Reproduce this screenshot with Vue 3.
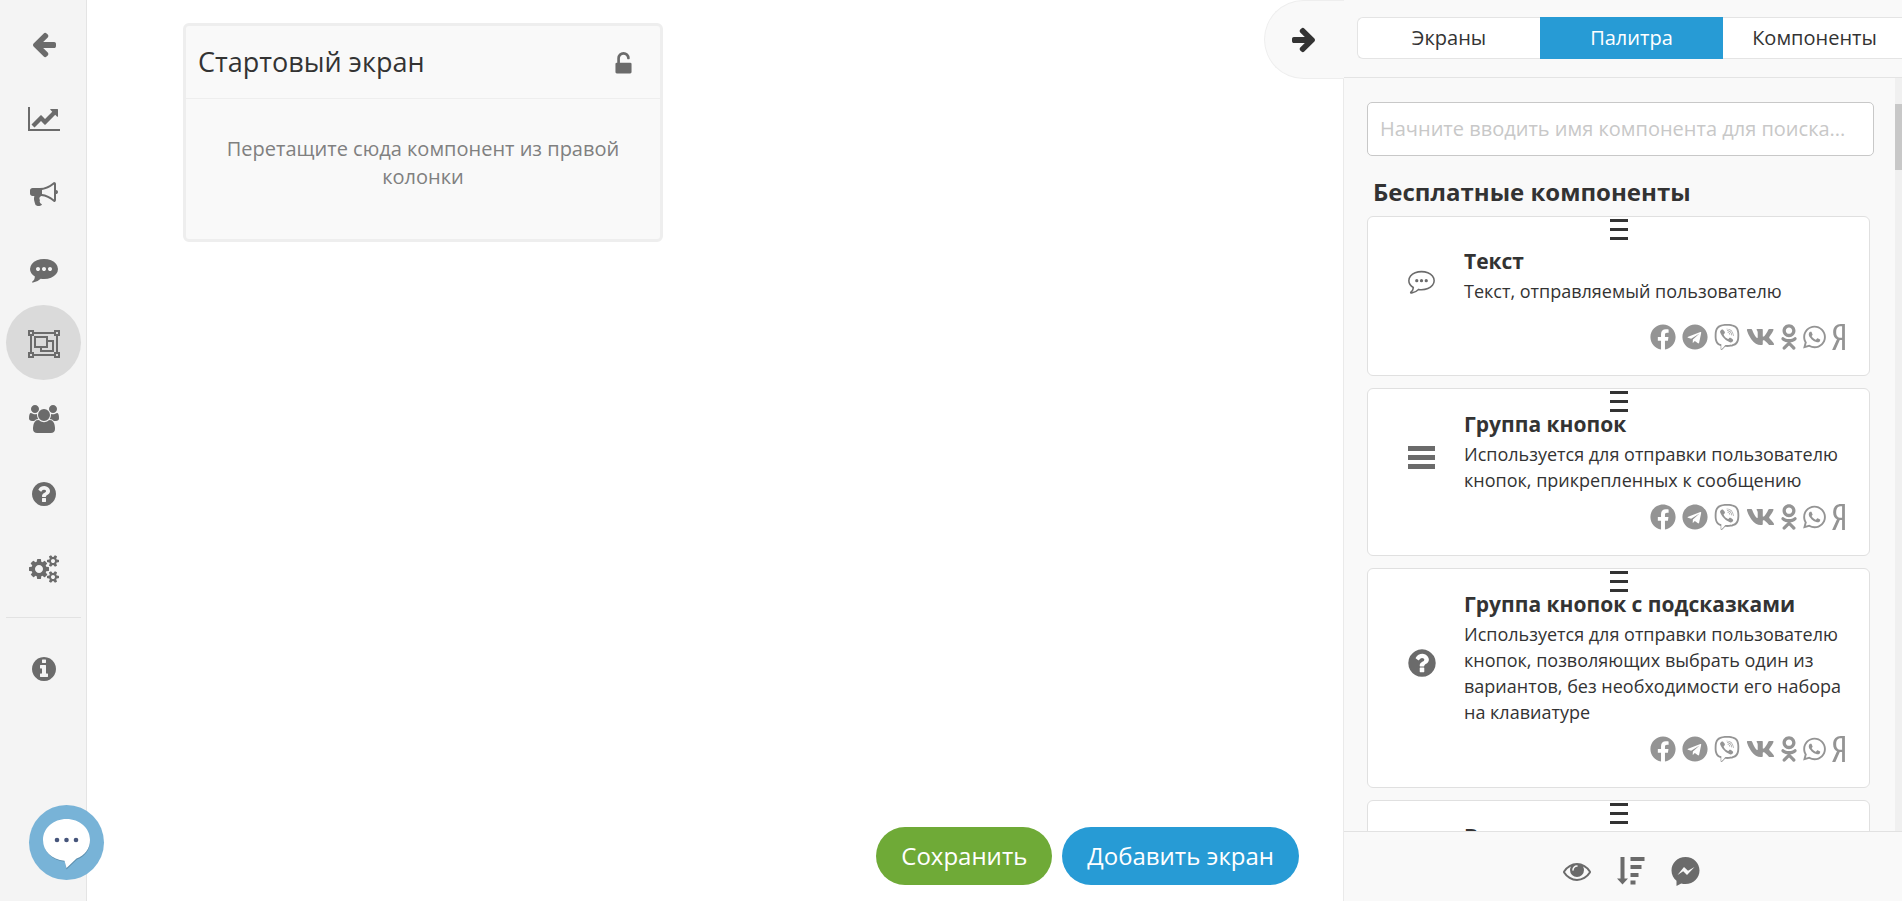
<template>
  <div class="builder">
    <nav class="sidebar" aria-label="Меню">
      <a
        v-for="item in menu"
        :key="item.icon"
        href="#"
        class="sidebar-item"
        :class="{ active: item.active, separated: item.separated }"
        :aria-label="item.label"
      >
        <svg class="icon" :width="icons[item.icon].w / 64" height="28" :viewBox="`0 0 ${icons[item.icon].w} 1792`">
          <path :d="icons[item.icon].d" />
        </svg>
      </a>
    </nav>

    <main class="workspace">
      <section class="screen">
        <header class="screen-header">
          <h2 class="screen-title">Стартовый экран</h2>
          <button class="icon-button" aria-label="Заблокировать">
            <svg class="icon" width="25" height="25" viewBox="0 0 1792 1792">
              <path :d="icons.unlock.d" />
            </svg>
          </button>
        </header>
        <p class="screen-hint">Перетащите сюда компонент из правой колонки</p>
      </section>

      <div class="actions">
        <button class="action save">Сохранить</button>
        <button class="action add">Добавить экран</button>
      </div>
    </main>

    <aside class="panel">
      <button class="collapse" aria-label="Свернуть">
        <svg class="icon" width="28" height="28" viewBox="0 0 1792 1792">
          <path :d="icons.right.d" />
        </svg>
      </button>

      <div class="tabs">
        <button
          v-for="tab in tabs"
          :key="tab"
          class="tab"
          :class="{ active: tab === activeTab }"
          @click="activeTab = tab"
        >{{ tab }}</button>
      </div>

      <div class="panel-body">
        <div class="palette">
          <input
            v-model="search"
            class="search"
            type="text"
            aria-label="Поиск компонента"
            placeholder="Начните вводить имя компонента для поиска..."
          >
          <h3 class="palette-title">Бесплатные компоненты</h3>

          <article v-for="card in cards" :key="card.title" class="card">
            <svg class="grip" width="18" height="21" viewBox="0 0 18 21">
              <path d="M0 0h18v3H0zM0 9h18v3H0zM0 18h18v3H0z" />
            </svg>
            <div class="card-body">
              <div class="card-icon">
                <svg v-if="card.icon === 'comment'" width="27" height="27" viewBox="-60 0 1912 1912">
                  <path class="outline" :d="bubble" />
                  <circle cx="560" cy="896" r="115" />
                  <circle cx="896" cy="896" r="115" />
                  <circle cx="1232" cy="896" r="115" />
                </svg>
                <svg v-else-if="card.icon === 'bars'" width="27" height="23" viewBox="0 0 27 23">
                  <path d="M0 0h27v5H0zM0 9h27v5H0zM0 18h27v5H0z" />
                </svg>
                <svg v-else width="32" height="32" viewBox="0 0 1792 1792">
                  <path :d="icons.question.d" />
                </svg>
              </div>
              <div class="card-text">
                <h4 class="card-title">{{ card.title }}</h4>
                <p class="card-description">{{ card.description }}</p>
              </div>
            </div>
            <div class="socials">
              <svg
                v-for="s in socials"
                :key="s.name"
                :width="s.px"
                height="26"
                :viewBox="`0 0 ${s.w} 512`"
              >
                <path :d="s.d" />
              </svg>
            </div>
          </article>
        </div>
        <div class="scrollbar">
          <div class="thumb"></div>
        </div>
      </div>

      <footer class="panel-footer">
        <button class="icon-button" aria-label="Просмотр">
          <svg class="icon" width="28" height="28" viewBox="0 0 1792 1792">
            <path :d="icons.eye.d" />
          </svg>
        </button>
        <button class="icon-button" aria-label="Сортировка">
          <svg class="icon" width="28" height="28" viewBox="0 0 28 28">
            <path d="M3.5 0h4v21.5H11L5.500 27.500 0 21.500h3.500zM13.500 0h14v4h-14zM13.500 8h11v4h-11zM13.500 16h8v4h-8zM13.500 23.500h5v4h-5z" />
          </svg>
        </button>
        <button class="icon-button" aria-label="Messenger">
          <svg class="icon" width="28" height="28" viewBox="0 0 28 28">
            <path fill-rule="evenodd" d="M14.500 0C6.500 0 .5 6 .5 13.500c0 4.200 1.900 7.700 5 10.200V29l4.700-2.600c1.400.4 2.800.6 4.300.6 8 0 14-6 14-13.500S22.500 0 14.500 0zM6.500 18L13 10l4 3.800L23.500 10 16 18l-3.800-3.800z" />
          </svg>
        </button>
      </footer>
    </aside>

    <button class="chat" aria-label="Чат">
      <svg width="75" height="75" viewBox="0 0 75 75">
        <path class="chat-shadow" d="M37.500 15.500C24.500 15.500 14.500 24.500 14.500 36c0 10.500 8.500 19.500 21.500 20.800l1.500 7.700 10.500-10c8.500-3 13-10 13-18.500 0-11.500-10.500-20.500-23.500-20.500z" />
        <path class="chat-bubble" d="M37.500 14C24.500 14 14 23 14 35c0 11 8.500 19.500 21.500 20.800l2 7.200 10-9.500C56 50.500 61 43.500 61 35c0-12-10.500-21-23.500-21z" />
        <circle class="chat-dot" cx="28" cy="35" r="2.300" />
        <circle class="chat-dot" cx="37.500" cy="35" r="2.300" />
        <circle class="chat-dot" cx="47" cy="35" r="2.300" />
      </svg>
    </button>
  </div>
</template>

<script setup>
import { ref } from 'vue'

const search = ref('')
const tabs = ['Экраны', 'Палитра', 'Компоненты']
const activeTab = ref('Палитра')

const menu = [
  { icon: 'left', label: 'Назад' },
  { icon: 'chart', label: 'Статистика' },
  { icon: 'bullhorn', label: 'Рассылки' },
  { icon: 'commenting', label: 'Диалоги' },
  { icon: 'group', label: 'Конструктор', active: true },
  { icon: 'users', label: 'Пользователи' },
  { icon: 'question', label: 'Помощь' },
  { icon: 'cogs', label: 'Настройки' },
  { icon: 'info', label: 'Информация', separated: true }
]

const cards = [
  {
    icon: 'comment',
    title: 'Текст',
    description: 'Текст, отправляемый пользователю'
  },
  {
    icon: 'bars',
    title: 'Группа кнопок',
    description: 'Используется для отправки пользователю кнопок, прикрепленных к сообщению'
  },
  {
    icon: 'question',
    title: 'Группа кнопок с подсказками',
    description: 'Используется для отправки пользователю кнопок, позволяющих выбрать один из вариантов, без необходимости его набора на клавиатуре'
  },
  {
    icon: 'question',
    title: 'Вопрос',
    description: 'Используется для отправки пользователю вопроса и получения ответа на него'
  }
]

const circle = 'm640 0q0 209-103 385.5t-279.5 279.5-385.5 103-385.5-103-279.5-279.5-103-385.5 103-385.5 279.5-279.5 385.5-103 385.5 103 279.5 279.5 103 385.5z'
const bubble = 'M1792 896q0 174-120 321.5t-326 233-450 85.5q-110 0-211-18-173 173-435 229-52 10-86 13-12 1-22-6t-13-18q-4-15 20-37 5-5 23.5-21.5t25.5-23.5 23.5-25.5 24-31.500 20.5-37 20-48 14.5-57.5 12.500-72.500q-146-90-229.5-216.5t-83.5-269.5q0-174 120-321.5t326-233 450-85.5 450 85.5 326 233 120 321.5z'
const dot = 'q0-53-37.5-90.5t-90.5-37.5-90.5 37.5-37.5 90.5 37.5 90.5 90.5 37.5 90.5-37.5 37.5-90.5z'
const smallGear = 'v140q0 16-149 31-12 27-30 52 51 113 51 138 0 4-4 7-122 71-124 71-8 0-46-47t-52-68q-20 2-30 2t-30-2q-14 21-52 68t-46 47q-2 0-124-71-4-3-4-7 0-25 51-138-18-25-30-52-149-15-149-31v-140q0-16 149-31 13-29 30-52-51-113-51-138 0-4 4-7 4-2 35-20t59-34 30-16q8 0 46 46.500t52 67.500q20-2 30-2t30 2q51-71 92-112l6-2q4 0 124 70 4 3 4 7 0 25-51 138 17 23 30 52 149 15 149 31z'

const icons = {
  left: {
    w: 1792,
    d: 'M1664 896v128q0 53-32.5 90.5t-84.5 37.5h-704l293 294q38 36 38 90t-38 90l-75 76q-37 37-90 37-52 0-91-37l-651-652q-37-37-37-90 0-52 37-91l651-650q38-38 91-38 52 0 90 38l75 74q38 38 38 91t-38 91l-293 293h704q52 0 84.500 37.500t32.500 90.500z'
  },
  right: {
    w: 1792,
    d: 'M1600 960q0 54-37 91l-651 651q-39 37-91 37-51 0-90-37l-75-75q-38-38-38-91t38-91l293-293h-704q-52 0-84.500-37.500t-32.500-90.500v-128q0-53 32.500-90.500t84.500-37.500h704l-293-294q-38-36-38-90t38-90l75-75q38-38 90-38 53 0 91 38l651 651q37 35 37 90z'
  },
  chart: {
    w: 2048,
    d: 'M2048 1536v128h-2048v-1536h128v1408h1920zm-128-1248v435q0 21-19.5 29.500t-35.500-7.500l-121-121-633 633q-10 10-23 10t-23-10l-233-233-416 416-192-192 585-585q10-10 23-10t23 10l233 233 464-464-121-121q-16-16-7.500-35.500t29.500-19.500h435q14 0 23 9t9 23z'
  },
  bullhorn: {
    w: 1792,
    d: 'M1664 640q53 0 90.500 37.500t37.500 90.500-37.500 90.500-90.500 37.500v384q0 52-38 90t-90 38q-417-347-812-380-58 19-91 66t-31 100.500 40 92.500q-20 33-23 65.500t6 58 33.500 55 48 50 61.500 50.500q-29 58-111.500 83t-168.500 11.500-132-55.500q-7-23-29.500-87.500t-32-94.500-23-89-15-101 3.500-98.500 22-110.500h-122q-66 0-113-47t-47-113v-192q0-66 47-113t113-47h480q435 0 896-384 52 0 90 38t38 90v384zm-128 604v-954q-394 302-768 343v270q377 42 768 341z'
  },
  commenting: {
    w: 1792,
    d: `M640 896${dot}M1024 896${dot}M1408 896${dot}${bubble}`
  },
  group: {
    w: 2048,
    d: 'M2048 384h-128v1024h128v384h-384v-128h-1280v128h-384v-384h128v-1024h-128v-384h384v128h1280v-128h384v384zm-256-256v128h128v-128h-128zm-1664 0v128h128v-128h-128zm128 1536v-128h-128v128h128zm1408-128v-128h128v-1024h-128v-128h-1280v128h-128v1024h128v128h1280zm256 128v-128h-128v128h128zM1280 640h384v768h-896v-256h-384v-768h896v256zm-768 384h640v-512h-640v512zm1024 256v-512h-256v384h-384v128h640z'
  },
  users: {
    w: 1920,
    d: 'M593 896q-162 5-265 128h-134q-82 0-138-40.500t-56-118.500q0-353 124-353 6 0 43.500 21t97.500 42.500 119 21.500q67 0 133-23-5 37-5 66 0 139 81 256zm1071 637q0 120-73 189.500t-194 69.500h-874q-121 0-194-69.500t-73-189.500q0-53 3.500-103.500t14-109 26.500-108.500 43-97.500 62-81 85.500-53.500 111.500-20q10 0 43 21.500t73 48 107 48 135 21.500 135-21.500 107-48 73-48 43-21.500q61 0 111.500 20t85.500 53.500 62 81 43 97.500 26.500 108.500 14 109 3.500 103.500zm-1024-1277q0 106-75 181t-181 75-181-75-75-181 75-181 181-75 181 75 75 181zm704 384q0 159-112.500 271.500t-271.500 112.500-271.500-112.500-112.500-271.500 112.500-271.500 271.500-112.500 271.500 112.500 112.500 271.500zm576 225q0 78-56 118.500t-138 40.500h-134q-103-123-265-128 81-117 81-256 0-29-5-66 66 23 133 23 59 0 119-21.500t97.500-42.500 43.500-21q124 0 124 353zm-128-609q0 106-75 181t-181 75-181-75-75-181 75-181 181-75 181 75 75 181z'
  },
  question: {
    w: 1792,
    d: `M1024 1376v-192q0-14-9-23t-23-9h-192q-14 0-23 9t-9 23v192q0 14 9 23t23 9h192q14 0 23-9t9-23zm256-672q0-88-55.500-163t-138.500-116-170-41q-243 0-371 213-15 24 8 42l132 100q7 6 19 6 16 0 25-12 53-68 86-92 34-24 86-24 48 0 85.500 26t37.500 59q0 38-20 61t-68 45q-63 28-115.500 86.500t-52.500 125.500v36q0 14 9 23t23 9h192q14 0 23-9t9-23q0-19 21.500-49.500t54.500-49.500q32-18 49-28.500t46-35 44.500-48 28-60.500 12.500-81zM1024 896${circle}`
  },
  cogs: {
    w: 1920,
    d: `M896 896q0-106-75-181t-181-75-181 75-75 181 75 181 181 75 181-75 75-181zm768 512q0-52-38-90t-90-38-90 38-38 90q0 53 37.500 90.500t90.500 37.500 90.500-37.500 37.500-90.500zm0-1024q0-52-38-90t-90-38-90 38-38 90q0 53 37.500 90.500t90.500 37.500 90.500-37.500 37.500-90.500zm-384 421v185q0 10-7 19.500t-16 10.500l-155 24q-11 35-32 76 34 48 90 115 7 11 7 20 0 12-7 19-23 30-82.500 89.500t-78.500 59.500q-11 0-21-7l-115-90q-37 19-77 31-11 108-23 155-7 24-30 24h-186q-11 0-20-7.500t-10-17.500l-23-153q-34-10-75-31l-118 89q-7 7-20 7-11 0-21-8-144-133-144-160 0-9 7-19 10-14 41-53t47-61q-23-44-35-82l-152-24q-10-1-17-9.500t-7-19.500v-185q0-10 7-19.500t16-10.500l155-24q11-35 32-76-34-48-90-115-7-11-7-20 0-12 7-20 22-30 82-89t79-59q11 0 21 7l115 90q34-18 77-32 11-108 23-154 7-24 30-24h186q11 0 20 7.500t10 17.500l23 153q34 10 75 31l118-89q8-7 20-7 11 0 21 8 144 133 144 160 0 8-7 19-12 16-42 54t-45 60q23 48 34 82l152 23q10 2 17 10.500t7 19.500zM1920 1338${smallGear}M1920 314${smallGear}`
  },
  info: {
    w: 1792,
    d: `M1152 1376v-160q0-14-9-23t-23-9h-96v-512q0-14-9-23t-23-9h-320q-14 0-23 9t-9 23v160q0 14 9 23t23 9h96v320h-96q-14 0-23 9t-9 23v160q0 14 9 23t23 9h448q14 0 23-9t9-23zm-128-896v-160q0-14-9-23t-23-9h-192q-14 0-23 9t-9 23v160q0 14 9 23t23 9h192q14 0 23-9t9-23zM1024 896${circle}`
  },
  unlock: {
    w: 1792,
    d: 'M1376 768q40 0 68 28t28 68v576q0 40-28 68t-68 28h-960q-40 0-68-28t-28-68v-576q0-40 28-68t68-28h32v-320q0-185 131.500-316.500t316.500-131.500 316.500 131.500 131.500 316.500q0 26-19 45t-45 19h-64q-26 0-45-19t-19-45q0-106-75-181t-181-75-181 75-75 181v320h736z'
  },
  eye: {
    w: 1792,
    d: 'M1664 960q-152-236-381-353 61 104 61 225 0 185-131.500 316.500t-316.500 131.500-316.500-131.500-131.500-316.500q0-121 61-225-229 117-381 353 133 205 333.500 326.500t434.500 121.500 434.500-121.500 333.500-326.500zm-720-384q0-20-14-34t-34-14q-125 0-214.500 89.500t-89.500 214.500q0 20 14 34t34 14 34-14 14-34q0-86 61-147t147-61q20 0 34-14t14-34zm848 384q0 34-20 69-140 230-376.500 368.500t-499.500 138.500-499.500-139-376.500-368q-20-35-20-69t20-69q140-229 376.500-368t499.500-139 499.500 139 376.500 368q20 35 20 69z'
  }
}

const socials = [
  {
    name: 'facebook',
    px: 26,
    w: 512,
    d: 'M504 256C504 119 393 8 256 8S8 119 8 256c0 123.780 90.690 226.380 209.250 245V327.690h-63V256h63v-54.640c0-62.150 37-96.480 93.670-96.480 27.140 0 55.520 4.840 55.520 4.840v61h-31.280c-30.800 0-40.410 19.120-40.410 38.730V256h68.780l-11 71.690h-57.780V501C413.310 482.380 504 379.780 504 256z'
  },
  {
    name: 'telegram',
    px: 26,
    w: 496,
    d: 'M248 8C111 8 0 119 0 256s111 248 248 248 248-111 248-248S385 8 248 8zm121.800 169.900l-40.700 191.800c-3 13.600-11.100 16.900-22.400 10.500l-62-45.700-29.900 28.800c-3.300 3.300-6.100 6.100-12.500 6.100l4.400-63.100 114.900-103.800c5-4.400-1.100-6.900-7.700-2.500l-142 89.400-61.200-19.100c-13.300-4.200-13.600-13.300 2.800-19.700l239.100-92.200c11.100-4 20.800 2.700 17.200 19.500z'
  },
  {
    name: 'viber',
    px: 26,
    w: 512,
    d: 'M444 49.900C431.300 38.200 379.900.9 265.300.4c0 0-135.100-8.100-200.900 52.300C27.800 89.300 14.900 143 13.500 209.500c-1.400 66.500-3.100 191.100 117 224.900h.1l-.1 51.600s-.8 20.900 13 25.100c16.600 5.200 26.400-10.700 42.300-27.800 8.700-9.400 20.700-23.200 29.800-33.700 82.200 6.900 145.300-8.900 152.500-11.200 16.600-5.400 110.500-17.400 125.700-142 15.800-128.600-7.600-209.800-49.800-246.500zM457.900 287c-12.900 104-89 110.600-103 115.100-6 1.900-61.500 15.700-131.200 11.200 0 0-52 62.700-68.200 79-5.300 5.300-11.100 4.800-11-5.700 0-6.900.4-85.700.4-85.700-101.800-28.200-95.800-134.300-94.700-189.800 1.100-55.500 11.600-101 42.600-131.600 55.700-50.500 170.400-43 170.400-43 96.900.4 143.300 29.600 154.100 39.400 35.700 30.600 53.900 103.800 40.600 211.100zm-139-80.800c.4 8.600-12.500 9.200-12.900.6-1.100-22-11.400-32.700-32.600-33.900-8.600-.5-7.800-13.400.7-12.900 27.900 1.500 43.400 17.500 44.800 46.200zm20.300 11.300c1-42.400-25.500-75.600-75.800-79.300-8.500-.6-7.600-13.500.9-12.900 58 4.200 88.900 44.100 87.800 92.500-.1 8.600-13.100 8.200-12.900-.3zm47 13.400c.1 8.600-12.900 8.700-12.900.1-.6-81.500-54.900-125.900-120.800-126.400-8.500-.1-8.500-12.900 0-12.900 73.700.5 133 51.400 133.700 139.200zM374.900 329v.2c-10.800 19-31 40-51.800 33.300l-.2-.3c-21.100-5.900-70.800-31.500-102.200-56.500-16.200-12.800-31-27.900-42.400-42.400-10.300-12.900-20.700-28.200-30.800-46.600-21.300-38.500-26-55.700-26-55.700-6.700-20.800 14.200-41 33.300-51.800h.2c9.200-4.800 18-3.200 23.900 3.900 0 0 12.400 14.800 17.700 22.100 5 6.800 11.700 17.700 15.200 23.800 6.100 10.900 2.300 22-3.700 26.600l-12 9.600c-6.100 4.900-5.300 14-5.300 14s17.800 67.300 84.300 84.300c0 0 9.100.8 14-5.300l9.600-12c4.600-6 15.700-9.800 26.600-3.700 14.700 8.300 33.400 21.200 45.800 32.900 7 5.700 8.600 14.400 3.800 23.600z'
  },
  {
    name: 'vk',
    px: 29,
    w: 576,
    d: 'M545 117.700c3.700-12.500 0-21.700-17.800-21.700h-58.900c-15 0-21.900 7.900-25.600 16.700 0 0-30 73.100-72.400 120.500-13.700 13.700-20 18.100-27.500 18.100-3.700 0-9.400-4.400-9.400-16.900V117.700c0-15-4.200-21.700-16.600-21.700h-92.600c-9.400 0-15 7-15 13.500 0 14.200 21.200 17.500 23.400 57.500v86.800c0 19-3.400 22.500-10.900 22.500-20 0-68.600-73.400-97.400-157.400-5.800-16.300-11.500-22.900-26.600-22.900H38.800c-16.800 0-20.200 7.900-20.200 16.700 0 15.600 20 93.100 93.100 195.500C160.400 378.100 229 416 291.400 416c37.500 0 42.100-8.400 42.100-22.900 0-66.800-3.400-73.100 15.400-73.100 8.700 0 23.700 4.400 58.700 38.100 40 40 46.600 57.900 69 57.900h58.900c16.800 0 25.300-8.400 20.400-25-11.200-34.900-86.900-106.700-90.300-111.500-8.700-11.200-6.200-16.200 0-26.200.1-.1 72-101.300 79.400-135.600z'
  },
  {
    name: 'ok',
    px: 16,
    w: 320,
    d: 'M275.100 334c-27.400 17.400-65.100 24.300-90 26.900l20.900 20.600 76.300 76.300c27.900 28.600-17.500 73.300-45.700 45.700-19.100-19.400-47.100-47.400-76.300-76.600L84 503.400c-28.200 27.500-73.600-17.600-45.400-45.700 19.400-19.400 47.100-47.400 76.300-76.300l20.600-20.600c-24.600-2.600-62.900-9.100-90.600-26.900-32.600-21-46.900-33.300-34.300-59 7.400-14.600 27.700-26.900 54.600-5.700 0 0 36.300 28.900 94.900 28.900s94.900-28.900 94.900-28.900c26.900-21.100 47.100-8.900 54.600 5.700 12.400 25.700-1.900 38-34.500 59.100zM30.300 129.700C30.300 58 88.600 0 160 0s129.700 58 129.700 129.700c0 71.400-58.300 129.400-129.700 129.400s-129.700-58-129.700-129.400zm66 0c0 35.100 28.600 63.700 63.700 63.700s63.700-28.600 63.700-63.700c0-35.400-28.600-64-63.700-64s-63.700 28.600-63.700 64z'
  },
  {
    name: 'whatsapp',
    px: 23,
    w: 448,
    d: 'M380.900 97.100C339 55.100 283.200 32 223.900 32c-122.400 0-222 99.600-222 222 0 39.100 10.200 77.300 29.600 111L0 480l117.700-30.900c32.400 17.700 68.900 27 106.100 27h.1c122.300 0 224.100-99.600 224.100-222 0-59.300-25.200-115-67.100-157zm-157 341.600c-33.200 0-65.700-8.900-94-25.700l-6.700-4-69.800 18.300L72 359.200l-4.400-7c-18.500-29.400-28.200-63.300-28.200-98.200 0-101.700 82.800-184.500 184.600-184.500 49.300 0 95.600 19.200 130.400 54.100 34.800 34.900 56.200 81.200 56.100 130.500 0 101.800-84.900 184.600-186.600 184.600zm101.200-138.200c-5.500-2.800-32.800-16.200-37.900-18-5.100-1.900-8.800-2.800-12.500 2.800-3.700 5.600-14.300 18-17.600 21.800-3.200 3.700-6.500 4.200-12 1.400-32.600-16.300-54-29.100-75.500-66-5.700-9.800 5.700-9.100 16.300-30.300 1.800-3.700.9-6.900-.5-9.700-1.400-2.800-12.500-30.100-17.100-41.200-4.500-10.800-9.100-9.300-12.500-9.500-3.200-.2-6.900-.2-10.600-.2-3.700 0-9.700 1.400-14.800 6.900-5.100 5.600-19.400 19-19.400 46.300 0 27.300 19.900 53.700 22.600 57.400 2.800 3.700 39.100 59.700 94.800 83.800 35.200 15.200 49 16.500 66.600 13.900 10.700-1.600 32.800-13.400 37.400-26.400 4.600-13 4.600-24.100 3.200-26.400-1.300-2.500-5-3.900-10.500-6.600z'
  },
  {
    name: 'yandex',
    px: 13,
    w: 256,
    d: 'M153.100 315.800L65.700 512H2l96-209.800c-45.100-22.900-75.200-64.400-75.200-141.100C22.700 53.700 90.800 0 171.700 0H254v512h-55.100V315.800h-45.800zm45.800-269.300h-29.400c-44.400 0-87.400 29.400-87.400 114.600 0 82.300 39.400 108.800 87.400 108.800h29.400V46.500z'
  }
]
</script>

<style>
body {
  margin: 0;
}
</style>

<style scoped>
.builder {
  position: relative;
  display: flex;
  height: 100vh;
  overflow: hidden;
  background: #fff;
  color: #333;
  font-family: "Open Sans", "Noto Sans", sans-serif;
  font-size: 20px;
  line-height: 28px;
}

.builder * {
  box-sizing: border-box;
}

button {
  padding: 0;
  border: none;
  background: none;
  color: inherit;
  font: inherit;
  cursor: pointer;
}

svg {
  display: block;
  flex: none;
  overflow: visible;
  fill: currentColor;
}

.sidebar {
  flex: none;
  width: 87px;
  padding: 5px 5px 5px 6px;
  border-right: 1px solid #e4e4e4;
  background: #f4f4f4;
  color: #6b6b6b;
}

.sidebar-item {
  display: flex;
  align-items: center;
  justify-content: center;
  width: 75px;
  height: 75px;
  padding-top: 3px;
  border-radius: 50%;
  color: inherit;
}

.sidebar-item.active {
  background: #dadada;
}

.sidebar-item.separated {
  position: relative;
  margin-top: 25px;
}

.sidebar-item.separated::before {
  content: "";
  position: absolute;
  top: -13px;
  left: 0;
  width: 100%;
  border-top: 1px solid #e2e2e2;
}

.workspace {
  display: flex;
  flex: 1;
  flex-direction: column;
  align-items: flex-start;
  justify-content: space-between;
  min-width: 0;
  padding: 23px 44px 16px 96px;
}

.screen {
  width: 480px;
  border: 3px solid #eee;
  border-radius: 6px;
  background: #f9f9f9;
}

.screen-header {
  display: flex;
  align-items: center;
  justify-content: space-between;
  height: 73px;
  padding: 0 24px 0 12px;
  border-bottom: 1px solid #eee;
}

.screen-title {
  margin: 0;
  font-size: 27px;
  font-weight: 400;
  line-height: 36px;
}

.screen-header .icon-button {
  padding-top: 4px;
}

.screen-hint {
  margin: 0;
  padding: 36px 24px 48px;
  color: #808080;
  text-align: center;
}

.icon-button {
  color: #6b6b6b;
}

.actions {
  display: flex;
  gap: 10px;
  align-self: flex-end;
}

.action {
  height: 58px;
  padding: 0 25px;
  border-radius: 29px;
  color: #fff;
  font-size: 24px;
}

.save {
  background: #6faa37;
}

.add {
  background: #279bd5;
}

.panel {
  position: relative;
  display: flex;
  flex: none;
  flex-direction: column;
  width: 559px;
  border-left: 1px solid #eaeaea;
  background: #f9f9f9;
}

.collapse {
  position: absolute;
  top: 0;
  left: -80px;
  display: flex;
  align-items: center;
  justify-content: center;
  width: 80px;
  height: 79px;
  padding: 0 2px 2px 0;
  border: 1px solid #eee;
  border-right: none;
  border-radius: 40px 0 0 40px;
  background: #f9f9f9;
}

.tabs {
  display: flex;
  flex: none;
  height: 78px;
  padding: 17px 0 18px 13px;
  border-bottom: 1px solid #e4e4e4;
  overflow: hidden;
}

.tab {
  flex: none;
  width: 183px;
  border: 1px solid #e4e4e4;
  border-width: 1px 0;
  background: #fff;
}

.tab:first-child {
  border-left-width: 1px;
  border-radius: 6px 0 0 6px;
}

.tab.active {
  border-color: #279bd5;
  background: #279bd5;
  color: #fff;
}

.panel-body {
  display: flex;
  flex: 1;
  min-height: 0;
}

.palette {
  flex: 1;
  min-width: 0;
  padding: 24px 21px 0 23px;
  overflow: hidden;
}

.search {
  width: 100%;
  height: 54px;
  padding: 0 12px 2px;
  border: 1px solid #c8c8c8;
  border-radius: 5px;
  background: #fff;
  color: inherit;
  font: inherit;
}

.search::placeholder {
  color: #c8c8c8;
}

.palette-title {
  margin: 22px 0 10px 6px;
  font-size: 24px;
  font-weight: 700;
}

.card {
  margin: 0 4px 12px 0;
  padding: 2px 0 25px;
  border: 1px solid #e0e0e0;
  border-radius: 6px;
  background: #fff;
}

.grip {
  margin: 0 auto -2px;
}

.card-body {
  display: flex;
  align-items: center;
  min-height: 86px;
  padding-right: 24px;
}

.card-icon {
  display: flex;
  flex: none;
  justify-content: center;
  width: 96px;
  padding-left: 11px;
  color: #6b6b6b;
}

.outline {
  fill: none;
  stroke: currentColor;
  stroke-width: 110px;
}

.card-text {
  padding-bottom: 11px;
}

.card-title {
  margin: 0 0 3px;
  font-size: 21px;
  font-weight: 700;
}

.card-description {
  margin: 0;
  font-size: 18px;
  line-height: 26px;
}

.socials {
  display: flex;
  justify-content: flex-end;
  gap: 6px;
  padding-right: 24px;
  color: #949494;
}

.scrollbar {
  flex: none;
  width: 7px;
  padding-top: 26px;
  background: #f0f0f0;
}

.thumb {
  height: 66px;
  background: #c8c8c8;
}

.panel-footer {
  display: flex;
  flex: none;
  align-items: center;
  justify-content: center;
  gap: 26px;
  height: 70px;
  padding: 8px 0 0 16px;
  border-top: 1px solid #e2e2e2;
}

.chat {
  position: absolute;
  bottom: 21px;
  left: 29px;
  width: 75px;
  height: 75px;
  border-radius: 50%;
  background: #78b3d7;
}

.chat-shadow {
  fill: #5d8fae;
}

.chat-bubble {
  fill: #fff;
}

.chat-dot {
  fill: #46557b;
}
</style>
